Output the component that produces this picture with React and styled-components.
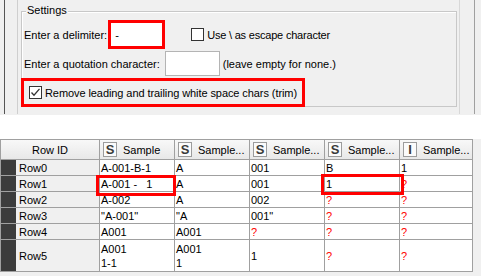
import React from 'react';
import styled, { createGlobalStyle } from 'styled-components';

const Global = createGlobalStyle`
  html, body { margin: 0; padding: 0; background: #fff; }
  body { font-family: "Liberation Sans", Arial, sans-serif; font-size: 11px; color: #000; }
  #root { width: 481px; height: 276px; overflow: hidden; }
`;

const Page = styled.div`
  width: 481px;
  height: 276px;
  display: flex;
  flex-direction: column;
  background: #fff;
  overflow: hidden;
`;

const TopPane = styled.div`
  height: 115px;
  flex: none;
  background: #f0f0f0;
  display: flex;
  align-items: flex-start;
  padding-left: 4px;
  box-sizing: border-box;
`;

const VLine = styled.div`
  width: 1px;
  height: ${p => p.$h || 114}px;
  flex: none;
  background: ${p => p.$c};
  margin-right: ${p => p.$gap || 0}px;
`;

const Panel = styled.div`
  width: 441px;
  flex: none;
  padding: 11px 0 0 3px;
  box-sizing: border-box;
`;

const Group = styled.div`
  position: relative;
  width: 436px;
  height: 96px;
  box-sizing: border-box;
  border: 1px solid #c8c8c8;
  box-shadow: inset 1px 1px 0 #fff;
  padding: 8px 0 0 2px;
  display: flex;
  flex-direction: column;
  gap: 2px;
`;

const Legend = styled.span`
  position: absolute;
  top: -8px;
  left: 4px;
  padding: 0 1px;
  background: #f0f0f0;
  line-height: 13px;
`;

const Row = styled.div`
  display: flex;
  align-items: center;
  height: ${p => p.$h}px;
  flex: none;
`;

const Label = styled.span`
  white-space: nowrap;
  margin-right: ${p => p.$mr || 0}px;
  letter-spacing: ${p => p.$ls || 0}px;
`;

const Field = styled.div`
  width: ${p => p.$w}px;
  height: ${p => p.$h}px;
  box-sizing: border-box;
  background: #fff;
  border: ${p => (p.$marked ? '3px solid #f00' : '1px solid #b4b4b4')};
  padding-left: 1px;
  display: flex;
  align-items: center;
  flex: none;
  margin-right: ${p => p.$mr || 0}px;
`;

const Check = styled.span`
  width: 13px;
  height: 13px;
  box-sizing: border-box;
  border: 1px solid #333;
  background: #fff;
  display: inline-flex;
  align-items: center;
  justify-content: center;
  flex: none;
  margin-right: 3px;
`;

const TrimRow = styled(Row)`
  margin-left: -3px;
  width: 284px;
  box-sizing: border-box;
  border: 3px solid #f00;
  padding-left: 5px;
`;

const WhiteGap = styled.div`
  height: 24px;
  flex: none;
`;

const Viewport = styled.div`
  position: relative;
  flex: 1;
  background: #f0f0f0;
`;

const Grid = styled.div`
  display: grid;
  grid-template-columns: 98px 74px 74px 74px 74px 72px;
  grid-template-rows: 19px repeat(5, 15px) 31px;
  gap: 1px;
  padding: 1px;
  background: #a0a0a0;
  width: fit-content;
`;

const HeadCell = styled.div`
  background: linear-gradient(#f8f8f8, #e8e8e8);
  display: flex;
  align-items: center;
  justify-content: ${p => (p.$center ? 'center' : 'flex-start')};
  padding-left: ${p => (p.$center ? 0 : 3)}px;
  white-space: nowrap;
  overflow: hidden;
`;

const TypeIcon = styled.span`
  width: 14px;
  height: 15px;
  box-sizing: border-box;
  border: 1px solid #9c9c9c;
  background: #fbfbfb;
  display: inline-flex;
  align-items: center;
  justify-content: center;
  font-weight: bold;
  font-size: 13px;
  color: #3a3a3a;
  margin-right: 6px;
  flex: none;
`;

const RowHead = styled.div`
  background: #f0f0f0;
  border-left: 15px solid #3c3c3c;
  display: flex;
  align-items: center;
  padding-left: 3px;
`;

const Cell = styled.div`
  background: #fff;
  display: flex;
  align-items: center;
  padding-left: 1px;
  line-height: 14px;
  white-space: pre;
  overflow: hidden;
  color: ${p => (p.$missing ? '#f00' : '#000')};
`;

const Mark = styled.div`
  position: absolute;
  box-sizing: border-box;
  border: 3px solid #f00;
  pointer-events: none;
`;

const CheckIcon = () => (
  <svg width="11" height="11" viewBox="0 0 11 11">
    <path d="M1.5 5.5 L4 8.2 L9.5 1.8" fill="none" stroke="#333" strokeWidth="1.3" />
  </svg>
);

const columns = [
  { t: 'S', label: 'Sample' },
  { t: 'S', label: 'Sample...' },
  { t: 'S', label: 'Sample...' },
  { t: 'S', label: 'Sample...' },
  { t: 'I', label: 'Sample...' },
];

const M = null;
const rows = [
  ['Row0', ['A-001-B-1', 'A', '001', 'B', '1']],
  ['Row1', ['A-001 -   1', 'A', '001', '1', M]],
  ['Row2', ['A-002', 'A', '002', M, M]],
  ['Row3', ['"A-001"', '"A', '001"', M, M]],
  ['Row4', ['A001', 'A001', M, M, M]],
  ['Row5', ['A001\n1-1', 'A001\n1', '1', M, M]],
];

export default function App() {
  return (
    <Page>
      <Global />
      <TopPane>
        <VLine $c="#555" $gap={12} $h={114} />
        <VLine $c="#cfcfcf" $h={114} />
        <Panel>
          <Group>
            <Legend>Settings</Legend>
            <Row $h={29}>
              <Label $mr={1}>Enter a delimiter:</Label>
              <Field $w={57} $h={29} $marked $mr={26}>
                <span style={{ paddingLeft: 3 }}>-</span>
              </Field>
              <Check />
              <Label $ls={-0.2}>Use \ as escape character</Label>
            </Row>
            <Row $h={25}>
              <Label $mr={5}>Enter a quotation character:</Label>
              <Field $w={55} $h={25} $mr={3} />
              <Label>(leave empty for none.)</Label>
            </Row>
            <TrimRow $h={29}>
              <Check>
                <CheckIcon />
              </Check>
              <Label $ls={-0.08}>Remove leading and trailing white space chars (trim)</Label>
            </TrimRow>
          </Group>
        </Panel>
        <VLine $c="#d8d8d8" $gap={14} $h={114} />
        <VLine $c="#a0a0a0" $h={114} />
      </TopPane>
      <WhiteGap />
      <Viewport>
        <Grid>
          <HeadCell $center>Row ID</HeadCell>
          {columns.map((c, i) => (
            <HeadCell key={i}>
              <TypeIcon>{c.t}</TypeIcon>
              {c.label}
            </HeadCell>
          ))}
          {rows.map(([id, vals]) => (
            <React.Fragment key={id}>
              <RowHead>{id}</RowHead>
              {vals.map((v, j) => (
                <Cell key={j} $missing={v === null}>
                  {v === null ? '?' : v}
                </Cell>
              ))}
            </React.Fragment>
          ))}
        </Grid>
        <Mark style={{ left: 96, top: 36, width: 80, height: 21 }} />
        <Mark style={{ left: 321, top: 35, width: 83, height: 21 }} />
      </Viewport>
    </Page>
  );
}
